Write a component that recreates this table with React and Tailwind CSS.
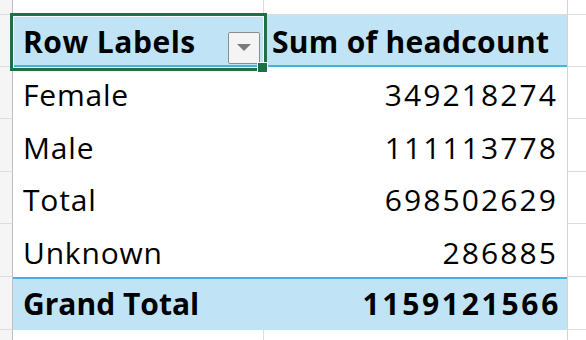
import React from 'react';

const rows = [
    { label: 'Female', value: '349218274', h: 'h-[52px]' },
    { label: 'Male', value: '111113778', h: 'h-[53px]' },
    { label: 'Total', value: '698502629', h: 'h-[52px]' },
    { label: 'Unknown', value: '286885', h: 'h-[53px]' },
];

function Gutter({ h }) {
    return <div className={`${h} w-[13px] shrink-0 bg-[#f5f5f5] border-r border-r-[#bfbfbf] border-b border-b-[#dcdcdc]`} />;
}

function Rest({ h }) {
    return <div className={`${h} flex-1 border-l border-l-[#d4d4d4] border-b border-b-[#dcdcdc]`} />;
}

function App() {
    return (
        <div className="w-[586px] h-[340px] bg-white overflow-hidden relative font-['Open_Sans',sans-serif] text-black">
            {/* row above the pivot */}
            <div className="flex h-[15px]">
                <Gutter h="h-[15px]" />
                <div className="w-[251px] h-[15px] border-r border-r-[#dcdcdc] border-b border-b-[#dcdcdc]" />
                <div className="w-[303px] h-[15px] border-b border-b-[#dcdcdc]" />
                <Rest h="h-[15px]" />
            </div>

            {/* header */}
            <div className="flex h-[52px]">
                <Gutter h="h-[52px]" />
                <div className="relative w-[251px] h-[52px] bg-[#c0e4f5] border-b-2 border-b-[#44b3e1] flex items-end pb-[3px] pl-[10px]">
                    <span className="text-[30px] leading-[40px] font-bold tracking-[0.5px]">Row Labels</span>
                    <div className="absolute left-[215px] top-[17px] w-[32px] h-[32px] bg-[#f4f4f4] border border-[#8c8c8c] rounded-[2px] flex items-center justify-center">
                        <svg width="14" height="8" viewBox="0 0 14 8">
                            <polygon points="0,0 14,0 7,7" fill="#7a7a7a" />
                        </svg>
                    </div>
                </div>
                <div className="w-[303px] h-[52px] bg-[#c0e4f5] border-b-2 border-b-[#44b3e1] flex items-end pb-[3px] pl-[8px]">
                    <span className="text-[30px] leading-[40px] font-bold tracking-[0.3px] whitespace-nowrap">Sum of headcount</span>
                </div>
                <Rest h="h-[52px]" />
            </div>

            {rows.map((r) => (
                <div key={r.label} className={`flex ${r.h}`}>
                    <Gutter h={r.h} />
                    <div className={`w-[251px] ${r.h} flex items-end pb-[4px] pl-[10px]`}>
                        <span className="text-[30px] leading-[40px] tracking-[0.8px]">{r.label}</span>
                    </div>
                    <div className={`w-[303px] ${r.h} flex items-end justify-end pb-[4px] pr-[11px]`}>
                        <span className="text-[30px] leading-[40px] tracking-[2.1px] -mr-[2px]">{r.value}</span>
                    </div>
                    <Rest h={r.h} />
                </div>
            ))}

            {/* grand total */}
            <div className="flex h-[53px]">
                <Gutter h="h-[53px]" />
                <div className="w-[251px] h-[53px] bg-[#c0e4f5] border-t-2 border-t-[#44b3e1] flex items-end pb-[6px] pl-[10px]">
                    <span className="text-[30px] leading-[40px] font-bold">Grand Total</span>
                </div>
                <div className="w-[303px] h-[53px] bg-[#c0e4f5] border-t-2 border-t-[#44b3e1] flex items-end justify-end pb-[6px] pr-[9px]">
                    <span className="text-[30px] leading-[40px] font-bold tracking-[2.7px] -mr-[3px]">1159121566</span>
                </div>
                <Rest h="h-[53px]" />
            </div>

            {/* row below */}
            <div className="flex h-[20px]">
                <Gutter h="h-[20px]" />
                <div className="w-[251px] h-[20px] border-r border-r-[#dcdcdc]" />
                <div className="w-[303px] h-[20px]" />
                <Rest h="h-[20px]" />
            </div>

            {/* active cell selection */}
            <div className="absolute left-[10px] top-[13px] w-[257px] h-[58px] border-[3px] border-[#1f7145] pointer-events-none">
                <div className="absolute inset-0 border border-white" />
            </div>
            <div className="absolute left-[257px] top-[62px] w-[11px] h-[11px] bg-[#1f7145] border border-white" />
        </div>
    );
}

export default App;
